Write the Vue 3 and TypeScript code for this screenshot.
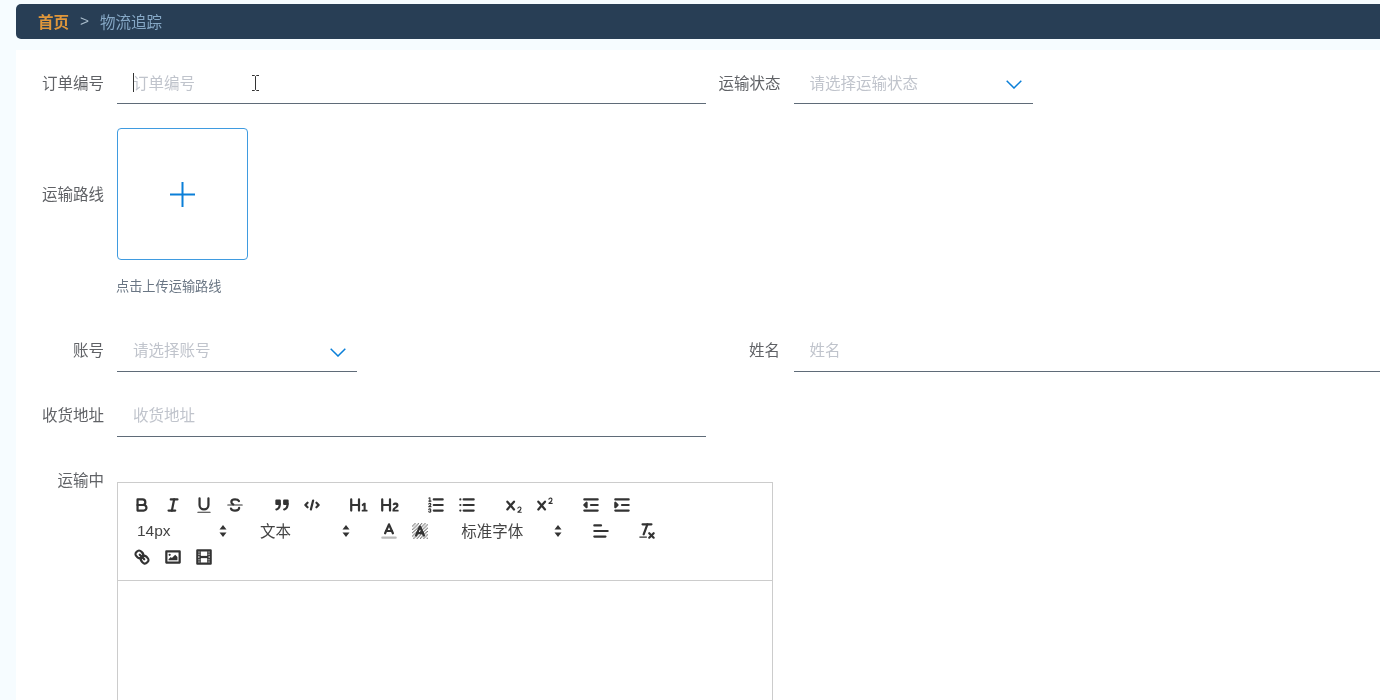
<script setup lang="ts">
const hatch: { x: number; y: number }[] = []
for (let y = 2; y < 16; y += 1) {
  for (let x = 2; x < 16; x += 1) {
    if ((x + y) % 3 === 0) hatch.push({ x, y })
  }
}
</script>

<template>
  <div class="page">
    <nav class="crumb">
      <span class="crumb-home">首页</span>
      <span class="crumb-sep">&gt;</span>
      <span class="crumb-current">物流追踪</span>
    </nav>

    <form class="form" @submit.prevent>
      <div class="row row-first">
        <div class="field field-left">
          <label class="label">订单编号</label>
          <div class="control control-wide">
            <input class="input" placeholder="订单编号" />
            <span class="caret"></span>
            <svg class="ibeam" viewBox="0 0 9 16" width="9" height="16" fill="none" stroke="#333" stroke-width="1">
              <path d="M1 .5h2.500L4.500 1.500 5.500 .5H8M4.500 1.500v13M1 15.500h2.500l1-1 1 1H8" />
            </svg>
          </div>
        </div>
        <div class="field field-right">
          <label class="label label-right">运输状态</label>
          <div class="control control-status">
            <input class="input" placeholder="请选择运输状态" readonly />
            <svg class="chevron" viewBox="0 0 16 9" width="16" height="9" fill="none" stroke="#0a7fd8" stroke-width="1.500">
              <path d="M.7 .7 8 8 15.300 .7" />
            </svg>
          </div>
        </div>
      </div>

      <div class="row row-upload">
        <div class="field">
          <label class="label label-upload">运输路线</label>
          <div>
            <div class="upload">
              <svg viewBox="0 0 25 25" width="25" height="25" fill="none" stroke="#0a7fd8" stroke-width="2">
                <path d="M0 12.500H25M12.500 0V25" />
              </svg>
            </div>
            <div class="tip">点击上传运输路线</div>
          </div>
        </div>
      </div>

      <div class="row">
        <div class="field field-left">
          <label class="label">账号</label>
          <div class="control control-select">
            <input class="input" placeholder="请选择账号" readonly />
            <svg class="chevron" viewBox="0 0 16 9" width="16" height="9" fill="none" stroke="#0a7fd8" stroke-width="1.500">
              <path d="M.7 .7 8 8 15.300 .7" />
            </svg>
          </div>
        </div>
        <div class="field field-right">
          <label class="label label-right">姓名</label>
          <div class="control control-fill">
            <input class="input" placeholder="姓名" />
          </div>
        </div>
      </div>

      <div class="row">
        <div class="field field-left">
          <label class="label">收货地址</label>
          <div class="control control-wide">
            <input class="input" placeholder="收货地址" />
          </div>
        </div>
      </div>

      <div class="row">
        <div class="field">
          <label class="label">运输中</label>
          <div class="editor">
            <div class="toolbar">
              <div class="tool-row">
                <span class="group">
                  <button type="button" class="btn"><svg viewBox="0 0 18 18"><path class="s" d="M5,4H9.500A2.500,2.500,0,0,1,12,6.500v0A2.500,2.500,0,0,1,9.500,9H5A0,0,0,0,1,5,9V4A0,0,0,0,1,5,4Z" /><path class="s" d="M5,9h5.500A2.500,2.500,0,0,1,13,11.500v0A2.500,2.500,0,0,1,10.500,14H5a0,0,0,0,1,0,0V9A0,0,0,0,1,5,9Z" /></svg></button>
                  <button type="button" class="btn"><svg viewBox="0 0 18 18"><line class="s" x1="7" x2="13" y1="4" y2="4" /><line class="s" x1="5" x2="11" y1="14" y2="14" /><line class="s" x1="8" x2="10" y1="14" y2="4" /></svg></button>
                  <button type="button" class="btn"><svg viewBox="0 0 18 18"><path class="s" d="M5,3V9a4.012,4.012,0,0,0,4,4H9a4.012,4.012,0,0,0,4-4V3" /><rect class="f" height="1" rx="0.500" ry="0.500" width="12" x="3" y="15" /></svg></button>
                  <button type="button" class="btn"><svg viewBox="0 0 18 18"><line class="s thin" x1="2.500" x2="15.500" y1="9" y2="9" /><path class="s" d="M12.500,5.500C12,4.500 10.800,4 9,4 7,4 5.700,5 5.700,6.300 5.700,7.300 6.300,8 7.500,8.500M12.700,11.500C12.700,13 11.200,14 9,14 7.200,14 5.800,13.400 5.400,12.200" /></svg></button>
                </span>
                <span class="group">
                  <button type="button" class="btn"><svg viewBox="0 0 18 18"><rect class="s f" height="3" width="3" x="4" y="5" /><rect class="s f" height="3" width="3" x="11" y="5" /><path class="s" d="M7,8c0,4.031-3,5-3,5" /><path class="s" d="M14,8c0,4.031-3,5-3,5" /></svg></button>
                  <button type="button" class="btn"><svg viewBox="0 0 18 18"><polyline class="s" points="5 7 3 9 5 11" /><polyline class="s" points="13 7 15 9 13 11" /><line class="s" x1="10" x2="8" y1="5" y2="13" /></svg></button>
                </span>
                <span class="group">
                  <button type="button" class="btn"><svg viewBox="0 0 18 18"><path class="f" d="M10,4V14a1,1,0,0,1-2,0V10H3v4a1,1,0,0,1-2,0V4A1,1,0,0,1,3,4V8H8V4a1,1,0,0,1,2,0Zm6.068,9.209H14.990V7.599a.541.541,0,0,0-.605-.605h-.627a1.011,1.011,0,0,0-.748.297L11.645,8.566a.544.544,0,0,0-.022.858l.286.308a.539.539,0,0,0,.847.033l.099-.088a1.214,1.214,0,0,0,.242-.353h.022s-.011.309-.011.605V13.209H12.041a.541.541,0,0,0-.605.605v.439a.541.541,0,0,0,.605.605h4.027a.541.541,0,0,0,.605-.605v-.439A.541.541,0,0,0,16.068,13.209Z" /></svg></button>
                  <button type="button" class="btn"><svg viewBox="0 0 18 18"><path class="f" d="M16.740,13.814v.439a.541.541,0,0,1-.605.605H11.855a.584.584,0,0,1-.649-.605V14.013c0-2.905,3.399-3.422,3.399-4.555a.777.777,0,0,0-.847-.781,1.177,1.177,0,0,0-.836.385c-.275.264-.561.374-.858.132l-.429-.341c-.308-.242-.385-.518-.154-.814a2.972,2.972,0,0,1,2.454-1.177,2.454,2.454,0,0,1,2.684,2.409c0,2.453-3.179,2.927-3.278,3.938h2.794A.541.541,0,0,1,16.740,13.814ZM9,3A1,1,0,0,0,8,4V8H3V4A1,1,0,0,0,1,4V14a1,1,0,0,0,2,0V10H8v4a1,1,0,0,0,2,0V4A1,1,0,0,0,9,3Z" /></svg></button>
                </span>
                <span class="group">
                  <button type="button" class="btn"><svg viewBox="0 0 18 18"><line class="s" x1="7" x2="15" y1="4" y2="4" /><line class="s" x1="7" x2="15" y1="9" y2="9" /><line class="s" x1="7" x2="15" y1="14" y2="14" /><line class="s thin" x1="2.500" x2="4.500" y1="5.500" y2="5.500" /><path class="f" d="M3.500,6A0.500,0.500,0,0,1,3,5.500V3.085l-0.276.138A0.500,0.500,0,0,1,2.053,3c-0.124-.247-0.023-0.324.224-0.447l1-.5A0.500,0.500,0,0,1,4,2.500v3A0.500,0.500,0,0,1,3.500,6Z" /><path class="s thin" d="M4.500,10.500h-2c0-.234,1.850-1.076,1.850-2.234A0.959,0.959,0,0,0,2.500,8.156" /><path class="s thin" d="M2.500,14.846a0.959,0.959,0,0,0,1.850-.109A0.700,0.700,0,0,0,3.750,14a0.688,0.688,0,0,0,.600-0.736,0.959,0.959,0,0,0-1.850-.109" /></svg></button>
                  <button type="button" class="btn"><svg viewBox="0 0 18 18"><line class="s" x1="6" x2="15" y1="4" y2="4" /><line class="s" x1="6" x2="15" y1="9" y2="9" /><line class="s" x1="6" x2="15" y1="14" y2="14" /><line class="s" x1="3" x2="3" y1="4" y2="4" /><line class="s" x1="3" x2="3" y1="9" y2="9" /><line class="s" x1="3" x2="3" y1="14" y2="14" /></svg></button>
                </span>
                <span class="group">
                  <button type="button" class="btn"><svg viewBox="0 0 18 18"><path class="f" d="M15.500,15H13.861a3.858,3.858,0,0,0,1.914-2.975,1.800,1.800,0,0,0-1.600-1.751A1.921,1.921,0,0,0,12.021,11.700a0.500,0.500,0,1,0,.957.291h0a0.914,0.914,0,0,1,1.053-.725,0.810,0.810,0,0,1,.744.762c0,1.076-1.170,1.870-1.940,2.431A1.456,1.456,0,0,0,12,15.500a0.500,0.500,0,0,0,.500.500h3A0.500,0.500,0,0,0,15.500,15Z" /><path class="f" d="M9.650,5.241a1,1,0,0,0-1.409.108L6,7.964,3.759,5.349A1,1,0,0,0,2.241,6.649L4.684,9.500,2.241,12.350A1,1,0,0,0,3.759,13.650L6,11.036,8.241,13.650a1,1,0,1,0,1.518-1.300L7.316,9.500,9.759,6.651A1,1,0,0,0,9.650,5.241Z" /></svg></button>
                  <button type="button" class="btn"><svg viewBox="0 0 18 18"><path class="f" d="M15.500,7H13.861a4.015,4.015,0,0,0,1.914-2.975,1.800,1.800,0,0,0-1.600-1.751A1.922,1.922,0,0,0,12.021,3.700a0.500,0.500,0,1,0,.957.291,0.917,0.917,0,0,1,1.053-.725,0.810,0.810,0,0,1,.744.762c0,1.077-1.164,1.925-1.934,2.486A1.423,1.423,0,0,0,12,7.500a0.500,0.500,0,0,0,.500.500h3A0.500,0.500,0,0,0,15.500,7Z" /><path class="f" d="M9.651,5.241a1,1,0,0,0-1.410.108L6,7.964,3.759,5.349a1,1,0,1,0-1.519,1.300L4.683,9.500,2.241,12.350a1,1,0,1,0,1.519,1.300L6,11.036,8.241,13.650a1,1,0,0,0,1.519-1.300L7.317,9.500,9.759,6.651A1,1,0,0,0,9.651,5.241Z" /></svg></button>
                </span>
                <span class="group">
                  <button type="button" class="btn"><svg viewBox="0 0 18 18"><line class="s" x1="3" x2="15" y1="14" y2="14" /><line class="s" x1="3" x2="15" y1="4" y2="4" /><line class="s" x1="9" x2="15" y1="9" y2="9" /><polyline class="s f" points="5 7 5 11 3 9 5 7" /></svg></button>
                  <button type="button" class="btn"><svg viewBox="0 0 18 18"><line class="s" x1="3" x2="15" y1="14" y2="14" /><line class="s" x1="3" x2="15" y1="4" y2="4" /><line class="s" x1="9" x2="15" y1="9" y2="9" /><polyline class="s f" points="3 7 3 11 5 9 3 7" /></svg></button>
                </span>
              </div>

              <div class="tool-row">
                <span class="group">
                  <span class="picker picker-size">14px
                    <svg class="sort" viewBox="0 0 8 14"><path d="M4 1 7.500 5.500H.5ZM4 13 .5 8.500H7.500Z" /></svg>
                  </span>
                </span>
                <span class="group">
                  <span class="picker picker-size picker-cjk">文本
                    <svg class="sort" viewBox="0 0 8 14"><path d="M4 1 7.500 5.500H.5ZM4 13 .5 8.500H7.500Z" /></svg>
                  </span>
                </span>
                <span class="group">
                  <button type="button" class="btn"><svg viewBox="0 0 18 18"><line class="s label-line" x1="3" x2="15" y1="15" y2="15" /><polyline class="s" points="5.500 11 9 3 12.500 11" /><line class="s" x1="11.630" x2="6.380" y1="9" y2="9" /></svg></button>
                  <button type="button" class="btn"><svg viewBox="0 0 18 18"><rect v-for="c in hatch" :key="`${c.x}-${c.y}`" class="dot" :x="c.x" :y="c.y" width="1" height="1" /><polyline class="s" points="5.500 13 9 5 12.500 13" /><line class="s" x1="11.630" x2="6.380" y1="11" y2="11" /></svg></button>
                </span>
                <span class="group">
                  <span class="picker picker-font">标准字体
                    <svg class="sort" viewBox="0 0 8 14"><path d="M4 1 7.500 5.500H.5ZM4 13 .5 8.500H7.500Z" /></svg>
                  </span>
                </span>
                <span class="group">
                  <button type="button" class="btn"><svg viewBox="0 0 18 18"><line class="s" x1="3" x2="15" y1="9" y2="9" /><line class="s" x1="3" x2="13" y1="14" y2="14" /><line class="s" x1="3" x2="9" y1="4" y2="4" /></svg></button>
                </span>
                <span class="group">
                  <button type="button" class="btn"><svg viewBox="0 0 18 18"><line class="s" x1="5" x2="13" y1="3" y2="3" /><line class="s" x1="6" x2="9.350" y1="12" y2="3" /><line class="s" x1="11" x2="15" y1="11" y2="15" /><line class="s" x1="15" x2="11" y1="11" y2="15" /><rect class="f" height="1" rx="0.500" ry="0.500" width="7" x="2" y="14" /></svg></button>
                </span>
              </div>

              <div class="tool-row">
                <span class="group">
                  <button type="button" class="btn"><svg viewBox="0 0 18 18"><line class="s" x1="7" x2="11" y1="7" y2="11" /><path class="s" d="M8.900,4.577a3.476,3.476,0,0,1,.36,4.679A3.476,3.476,0,0,1,4.577,8.900C3.185,7.500,2.035,6.400,4.217,4.217S7.500,3.185,8.900,4.577Z" /><path class="s" d="M13.423,9.100a3.476,3.476,0,0,0-4.679-.36,3.476,3.476,0,0,0,.36,4.679c1.392,1.392,2.500,2.542,4.679.36S14.815,10.500,13.423,9.100Z" /></svg></button>
                  <button type="button" class="btn"><svg viewBox="0 0 18 18"><rect class="s" height="10" width="12" x="3" y="4" /><circle class="f" cx="6" cy="7" r="1" /><polyline class="f" points="5 12 5 11 7 9 8 10 11 7 13 9 13 12 5 12" /></svg></button>
                  <button type="button" class="btn"><svg viewBox="0 0 18 18"><rect class="s" height="12" width="12" x="3" y="3" /><rect class="f" height="12" width="1" x="5" y="3" /><rect class="f" height="12" width="1" x="12" y="3" /><rect class="f" height="2" width="8" x="5" y="8" /><rect class="f" height="1" width="3" x="3" y="5" /><rect class="f" height="1" width="3" x="3" y="7" /><rect class="f" height="1" width="3" x="3" y="10" /><rect class="f" height="1" width="3" x="3" y="12" /><rect class="f" height="1" width="3" x="12" y="5" /><rect class="f" height="1" width="3" x="12" y="7" /><rect class="f" height="1" width="3" x="12" y="10" /><rect class="f" height="1" width="3" x="12" y="12" /></svg></button>
                </span>
              </div>
            </div>
            <div class="editor-body"></div>
          </div>
        </div>
      </div>
    </form>
  </div>
</template>

<style>
html,
body {
  margin: 0;
  overflow: hidden;
  background: #f6fcff;
}
</style>

<style scoped>
.page {
  height: 700px;
  overflow: hidden;
  padding: 4px 0 0 16px;
  box-sizing: border-box;
  background: #f6fcff;
  font-family: "Noto Sans CJK SC", "Liberation Sans", sans-serif;
  font-size: 15.500px;
  color: #606266;
  will-change: transform;
}

.crumb {
  height: 35px;
  display: flex;
  align-items: center;
  padding: 0 0 2px 22px;
  box-sizing: border-box;
  background: #283e55;
  border-radius: 5px 0 0 5px;
}

.crumb-home {
  font-weight: 700;
  color: #e0973b;
}

.crumb-sep {
  margin: 0 11px;
  color: #a9bccc;
  font-family: "Liberation Sans", sans-serif;
}

.crumb-current {
  color: #86a8c6;
}

.form {
  margin-top: 11px;
  padding-top: 14px;
  height: 700px;
  background: #fff;
}

.row {
  display: flex;
  margin-bottom: 25px;
}

.row-first {
  margin-bottom: 24px;
}

.row-upload {
  margin-bottom: 36px;
}

.field {
  display: flex;
}

.field-left {
  width: 689.500px;
  flex: none;
}

.field-right {
  flex: 1;
}

.label {
  width: 88px;
  height: 40px;
  line-height: 34px;
  margin-right: 13px;
  text-align: right;
  flex: none;
}

.row-first .label {
  line-height: 36px;
}

.label-right {
  width: 74.500px;
}

.row-first .label-right {
  width: 75px;
}

.label-upload {
  height: 132px;
  line-height: 130px;
}

.control {
  position: relative;
  height: 40px;
  box-sizing: border-box;
  border-bottom: 1px solid #5f6b78;
}

.control-wide {
  width: 589px;
}

.control-select {
  width: 240px;
}

.control-status {
  width: 239.500px;
}

.control-fill {
  flex: 1;
  margin-left: 0.500px;
}

.input {
  display: block;
  width: 100%;
  height: 39px;
  border: 0;
  outline: 0;
  padding: 0 16px 6px;
  box-sizing: border-box;
  background: transparent;
  font: inherit;
  color: inherit;
}

.row-first .input {
  padding-bottom: 4px;
}

.input::placeholder {
  color: #c0c4cc;
  opacity: 1;
}

.caret {
  position: absolute;
  left: 16px;
  top: 9px;
  width: 1px;
  height: 19px;
  background: #333;
}

.ibeam {
  position: absolute;
  left: 134px;
  top: 11px;
}

.chevron {
  position: absolute;
  right: 11px;
  top: 16px;
}

.upload {
  width: 131px;
  height: 132px;
  box-sizing: border-box;
  display: flex;
  align-items: center;
  justify-content: center;
  border: 1px solid #3f9be0;
  border-radius: 4px;
}

.tip {
  margin: 16px 0 0 -1px;
  height: 20px;
  line-height: 20px;
  font-size: 13.200px;
  color: #6a7684;
}

.editor {
  width: 656px;
  margin-top: 20px;
  box-sizing: border-box;
  border: 1px solid #ccc;
  border-bottom: 0;
}

.toolbar {
  height: 98px;
  padding: 9px 8px 0 9px;
  box-sizing: border-box;
  border-bottom: 1px solid #ccc;
}

.tool-row {
  display: flex;
  height: 26px;
}

.group {
  display: flex;
  margin-right: 15.600px;
  align-items: center;
}

.btn {
  width: 30.900px;
  height: 26px;
  padding: 3px 5.450px;
  box-sizing: border-box;
  border: 0;
  background: none;
}

.btn svg {
  display: block;
  width: 20px;
  height: 20px;
}

.s {
  fill: none;
  stroke: #333;
  stroke-width: 2;
  stroke-linecap: round;
  stroke-linejoin: round;
}

.thin {
  stroke-width: 1;
}

.f {
  fill: #333;
}

.label-line {
  stroke: #bbb;
}

.dot {
  fill: #555;
}

.picker {
  position: relative;
  display: block;
  box-sizing: border-box;
  height: 26px;
  line-height: 24px;
  color: #444;
  white-space: nowrap;
}

.picker-size {
  width: 108.400px;
  padding-left: 10px;
  font-family: "Liberation Sans", sans-serif;
  line-height: 26px;
}

.picker-size .sort {
  right: 8px;
}

.picker-cjk {
  width: 107.400px;
  padding-left: 9px;
  font-family: "Noto Sans CJK SC", sans-serif;
  line-height: 24px;
}

.picker-font {
  width: 118.400px;
  padding-left: 10px;
}

.sort {
  position: absolute;
  top: 6px;
  right: 8px;
  width: 8px;
  height: 14px;
  fill: #333;
}

.editor-body {
  height: 300px;
}
</style>
